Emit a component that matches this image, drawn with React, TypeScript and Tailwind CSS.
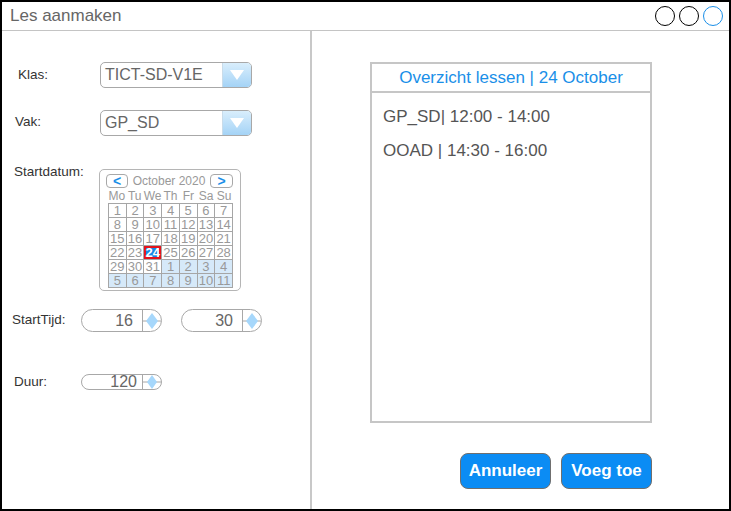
import React from 'react';

const FONT = "font-['Liberation_Sans',Arial,sans-serif]";

const WEEKS: number[][] = [
  [1, 2, 3, 4, 5, 6, 7],
  [8, 9, 10, 11, 12, 13, 14],
  [15, 16, 17, 18, 19, 20, 21],
  [22, 23, 24, 25, 26, 27, 28],
  [29, 30, 31, 1, 2, 3, 4],
  [5, 6, 7, 8, 9, 10, 11],
];

const DAYS = ['Mo', 'Tu', 'We', 'Th', 'Fr', 'Sa', 'Su'];

function Combo({ value }: { value: string }) {
  return (
    <div className="flex w-[152px] h-[26px] rounded-[5px] border border-[#a8a8a8] overflow-hidden bg-white">
      <div className="flex-1 pl-[4px] text-[16px] leading-[24px] text-[#666]">{value}</div>
      <div className="w-[29px] h-full flex items-center justify-center bg-gradient-to-b from-[#d9eefc] to-[#a4d3f6] border-l border-[#c9dcea]">
        <svg width="14" height="10" viewBox="0 0 14 10">
          <polygon points="0,0 14,0 7,10" fill="#fff" />
        </svg>
      </div>
    </div>
  );
}

function Spinner({ value, small }: { value: string; small?: boolean }) {
  return (
    <div
      className={`flex w-[81px] ${small ? 'h-[16px]' : 'h-[23px]'} rounded-full border border-[#a8a8a8] bg-white`}
    >
      <div
        className={`flex-1 ${small ? 'pr-[5px]' : 'pr-[9px]'} text-[16px] text-[#666] leading-none flex items-center justify-end`}
      >
        {value}
      </div>
      <div className="w-[19px] h-full border-l border-[#a8a8a8] flex items-center">
        <svg width="18" height={small ? 14 : 16} viewBox={`0 0 18 ${small ? 14 : 16}`}>
          <line x1="0" x2="18" y1={small ? 7 : 8} y2={small ? 7 : 8} stroke="#a8a8a8" strokeWidth="1" />
          {small ? (
            <polygon points="9,0 14,7 9,14 4,7" fill="#a6d7fb" />
          ) : (
            <polygon points="9,0 15,8 9,16 3,8" fill="#a6d7fb" />
          )}
        </svg>
      </div>
    </div>
  );
}

function Calendar() {
  return (
    <div className="w-[142px] h-[122px] rounded-[5px] border border-[#b5b5b5] bg-white pt-[4px]">
      <div className="flex items-center h-[14px] pl-[6px] pr-[7px]">
        <div className="w-[22px] h-[14px] rounded-[4px] border border-[#a8a8a8] flex items-center justify-center text-[#1a8fe8] font-bold text-[14px] leading-none">
          &lt;
        </div>
        <div className="flex-1 text-center text-[12px] text-[#999] leading-none">October 2020</div>
        <div className="w-[23px] h-[14px] rounded-[4px] border border-[#a8a8a8] flex items-center justify-center text-[#1a8fe8] font-bold text-[14px] leading-none">
          &gt;
        </div>
      </div>
      <div className="ml-[8px] w-[125px]">
        <div className="grid grid-cols-7 h-[15px] items-center">
          {DAYS.map((d) => (
            <div key={d} className="text-center text-[12px] text-[#999] leading-none">
              {d}
            </div>
          ))}
        </div>
        <div className="grid grid-cols-7 border-l border-t border-[#a6a6a6]">
          {WEEKS.map((week, wi) =>
            week.map((n, di) => {
              const next = (wi === 4 && di >= 3) || wi === 5;
              const sel = wi === 3 && n === 24;
              return (
                <div
                  key={`${wi}-${di}`}
                  className={`h-[14px] border-r border-b border-[#a6a6a6] flex items-center justify-center text-[13px] leading-none ${
                    sel
                      ? 'bg-[#1689e6] text-white font-bold shadow-[inset_0_0_0_2px_#e3141d]'
                      : next
                      ? 'bg-[#d6e9f9] text-[#999]'
                      : 'text-[#999]'
                  }`}
                >
                  {n}
                </div>
              );
            })
          )}
        </div>
      </div>
    </div>
  );
}

export default function App() {
  return (
    <div className={`${FONT} w-[731px] h-[511px] border-2 border-black bg-white flex flex-col`}>
      {/* Title bar */}
      <div className="h-[29px] border-b border-[#c4c4c4] flex items-center justify-between pl-[8px] pr-[6px]">
        <span className="text-[17px] text-[#666]">Les aanmaken</span>
        <div className="flex gap-[4px]">
          <div className="w-[20px] h-[20px] rounded-full border-[1.5px] border-black" />
          <div className="w-[20px] h-[20px] rounded-full border-[1.5px] border-black" />
          <div className="w-[20px] h-[20px] rounded-full border-[1.5px] border-[#1a8fe8]" />
        </div>
      </div>

      <div className="flex-1 flex">
        {/* Left form */}
        <div className="w-[310px] border-r-2 border-[#c8c8c8] pt-[31px] text-[13.5px] text-[#333]">
          <div className="flex items-center ml-[16px]">
            <div className="w-[82px] mt-[1px]">Klas:</div>
            <Combo value="TICT-SD-V1E" />
          </div>
          <div className="flex items-center ml-[13px] mt-[22px]">
            <div className="w-[85px] -mt-[2px]">Vak:</div>
            <Combo value="GP_SD" />
          </div>
          <div className="flex items-start ml-[12px] mt-[33px]">
            <div className="w-[85px] -mt-[7px]">Startdatum:</div>
            <Calendar />
          </div>
          <div className="flex items-center ml-[10px] mt-[18px]">
            <div className="w-[69px]">StartTijd:</div>
            <Spinner value="16" />
            <div className="w-[19px]" />
            <Spinner value="30" />
          </div>
          <div className="flex items-center ml-[12px] mt-[40px]">
            <div className="w-[67px]">Duur:</div>
            <Spinner value="120" small />
          </div>
        </div>

        {/* Right overview */}
        <div className="flex-1 pt-[31px] pl-[58px]">
          <div className="w-[282px] h-[361px] border-2 border-[#c6c6c6] flex flex-col">
            <div className="h-[29px] border-b-2 border-[#c6c6c6] flex items-center justify-center text-[17px] text-[#1a8fe8]">
              Overzicht lessen | 24 October
            </div>
            <div className="pl-[11px] pt-[14px] text-[17px] text-[#555] flex flex-col gap-[15px]">
              <div className="leading-[19px]">GP_SD| 12:00 - 14:00</div>
              <div className="leading-[19px]">OOAD | 14:30 - 16:00</div>
            </div>
          </div>
          <div className="w-[282px] flex justify-end gap-[10px] mt-[30px]">
            <button className="w-[91px] h-[36px] rounded-[8px] bg-[#0b8cf4] border border-[#6f6f6f] text-white font-bold text-[17px]">
              Annuleer
            </button>
            <button className="w-[91px] h-[36px] rounded-[8px] bg-[#0b8cf4] border border-[#6f6f6f] text-white font-bold text-[17px]">
              Voeg toe
            </button>
          </div>
        </div>
      </div>
    </div>
  );
}
